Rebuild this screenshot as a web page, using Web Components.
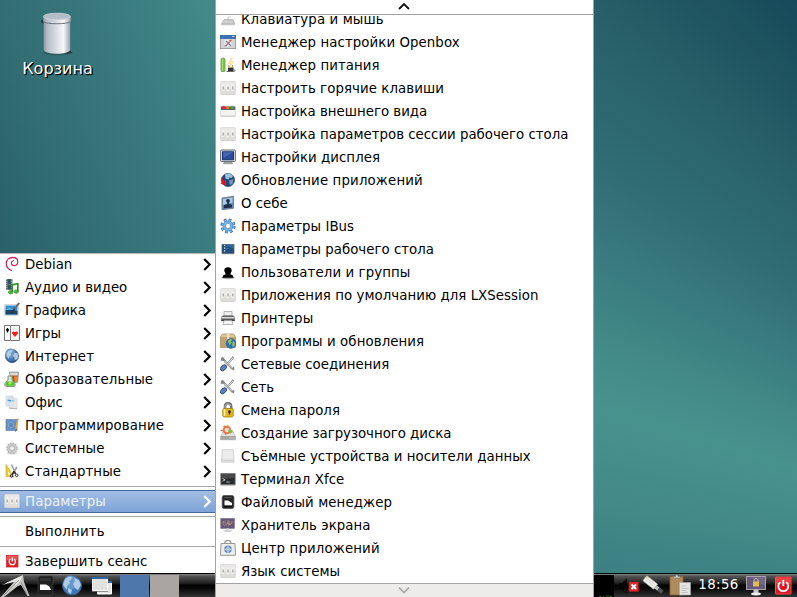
<!DOCTYPE html>
<html lang="ru">
<head>
<meta charset="utf-8">
<title>LXDE</title>
<style>
html,body{margin:0;width:797px;height:597px;overflow:hidden}
body{font:13.33px/23px "DejaVu Sans",sans-serif;color:#000}
</style>
</head>
<body>
<lx-desktop>
  <desk-shortcut slot="desk">Корзина</desk-shortcut>
  <lx-menu slot="main">
    <menu-row icon="debian" more>Debian</menu-row>
    <menu-row icon="media" more>Аудио и видео</menu-row>
    <menu-row icon="graphics" more>Графика</menu-row>
    <menu-row icon="games" more>Игры</menu-row>
    <menu-row icon="globe" more track=".16">Интернет</menu-row>
    <menu-row icon="edu" more track=".12">Образовательные</menu-row>
    <menu-row icon="office" more>Офис</menu-row>
    <menu-row icon="dev" more track=".11">Программирование</menu-row>
    <menu-row icon="gear" more track=".08">Системные</menu-row>
    <menu-row icon="util" more track=".1">Стандартные</menu-row>
    <menu-sep></menu-sep>
    <menu-row icon="switches" more active track=".12">Параметры</menu-row>
    <menu-sep></menu-sep>
    <menu-row track=".2">Выполнить</menu-row>
    <menu-sep></menu-sep>
    <menu-row icon="power" track=".05">Завершить сеанс</menu-row>
  </lx-menu>
  <scroll-menu slot="sub">
    <menu-row icon="keyboard" track=".11">Клавиатура и мышь</menu-row>
    <menu-row icon="openbox" track=".08">Менеджер настройки Openbox</menu-row>
    <menu-row icon="battery" track=".08">Менеджер питания</menu-row>
    <menu-row icon="switches" track=".07">Настроить горячие клавиши</menu-row>
    <menu-row icon="look">Настройка внешнего вида</menu-row>
    <menu-row icon="switches">Настройка параметров сессии рабочего стола</menu-row>
    <menu-row icon="display" track=".05">Настройки дисплея</menu-row>
    <menu-row icon="update" track=".15">Обновление приложений</menu-row>
    <menu-row icon="about">О себе</menu-row>
    <menu-row icon="ibus" track=".04">Параметры IBus</menu-row>
    <menu-row icon="desk" track=".02">Параметры рабочего стола</menu-row>
    <menu-row icon="users" track=".1">Пользователи и группы</menu-row>
    <menu-row icon="switches" track=".05">Приложения по умолчанию для LXSession</menu-row>
    <menu-row icon="printer" track=".2">Принтеры</menu-row>
    <menu-row icon="package" track=".09">Программы и обновления</menu-row>
    <menu-row icon="tools">Сетевые соединения</menu-row>
    <menu-row icon="tools">Сеть</menu-row>
    <menu-row icon="lock" track=".02">Смена пароля</menu-row>
    <menu-row icon="bootdisk" track="-.03">Создание загрузочного диска</menu-row>
    <menu-row icon="drive" track=".03">Съёмные устройства и носители данных</menu-row>
    <menu-row icon="terminal" track=".06">Терминал Xfce</menu-row>
    <menu-row icon="files" track=".1">Файловый менеджер</menu-row>
    <menu-row icon="saver" track=".06">Хранитель экрана</menu-row>
    <menu-row icon="bag" track=".14">Центр приложений</menu-row>
    <menu-row icon="switches">Язык системы</menu-row>
  </scroll-menu>
  <task-bar slot="bar">18:56</task-bar>
</lx-desktop>
<script>
const ICONS = {
debian:'<path d="M7.500 14.500C4.600 13.400 2.200 10.800 2.300 7.200 2.400 3.600 5.400 1.300 8.500 1.300c3.200 0 5.300 1.900 5.300 4.500 0 2.100-1.500 3.700-3.500 3.700-1.800 0-3.100-1.200-3-2.700.1-1.200 1-1.900 2.200-2" fill="none" stroke="#cb1d56" stroke-width="1.150" stroke-linecap="round"/><path d="M5 3.200C6.500 1.700 10 1 12 2.300" fill="none" stroke="#d0245c" stroke-width="1"/>',
media:'<path d="M2 0h6.500v11H2z" fill="#68737a"/><path d="M3.800 0h3v5h-3zm0 6h3v4h-3z" fill="#35505f"/><path d="M2.700 0v11M7.800 0v11" stroke="#cfd4d6" stroke-width=".7" stroke-dasharray="1 1"/><path d="M8.300 13V5.600l5.500-.9v7.500" fill="none" stroke="#2f8c28" stroke-width="1.700"/><ellipse cx="6.700" cy="13.200" rx="2.300" ry="1.700" fill="#4fb63b" stroke="#2a7a22" stroke-width=".6"/><ellipse cx="12.300" cy="12.600" rx="2.200" ry="1.700" fill="#4fb63b" stroke="#2a7a22" stroke-width=".6"/>',
graphics:'<path d="M.5 2.500h14v11H.5z" fill="#f4f4f2" stroke="#d0d0cc" stroke-width=".8"/><path d="M1.500 3.500h12v9h-12z" fill="#3191d2"/><path d="M1.500 8.500l4-1 8 1.500v3.500h-12z" fill="#17466f"/><path d="M1.500 7.500l4-1.300 4 1.300z" fill="#8ed0ee"/><path d="M15.200.8L9.500 8" stroke="#6a6c6c" stroke-width="1.900"/><path d="M10.500 7L7 11.500" stroke="#333" stroke-width="1.700"/>',
games:'<path d="M.5.5h6v15h-6z" fill="#fff" stroke="#777"/><path d="M6.500.5h9v15h-9z" fill="#f5f5f4" stroke="#777"/><path d="M3.500 3v4.500M2 5h3" stroke="#000" stroke-width="1.400"/><path d="M11 12L8.200 8.700C7.200 7 9.800 5.400 11 7.300c1.200-1.900 3.800-.3 2.800 1.400z" fill="#ef2020"/>',
globe:'<circle cx="8" cy="8" r="6.600" fill="#4775ae" stroke="#3b5c8c" stroke-width=".7"/><circle cx="6.500" cy="5.500" r="5" fill="#6d96c6"/><path d="M3 4.500C4.500 2 7 1.800 8.800 2.200l-.8 2-1.500.8 1 1.500-2 2-1 2.500-2-3zM10.500 4.800l3.200.5.400 4-2 3-1.500-1-.3-2.500-1.500-1z" fill="#b3c9e0"/><path d="M3.500 11.500c3 3 7 2.500 9.500-.5-2 4-6.500 5-9.500.5z" fill="#27436e"/>',
edu:'<path d="M5.500 1.200h9l-.9 10-6 .3z" fill="#d9dcd8" stroke="#777" stroke-width=".8"/><path d="M7.500 4.500h6.200l-.5 6-4 .5z" fill="#af5a21"/><path d="M10 5.500l3.600.2-.4 4.800-2 .2z" fill="#e98c28"/><path d="M4 5h4v3.500l3 4.200c.7 1.600 0 2.800-1.500 2.800h-7C1 15.500.3 14 1.200 12.500L4 8.500z" fill="#d2e8c8" stroke="#6f766b" stroke-width=".8"/><path d="M2.900 10.500h6.500l1 2c.6 1.500-.2 2.300-1.400 2.300H2.600c-1.200 0-1.500-1-1-2z" fill="#53c323"/><circle cx="6" cy="12" r="1.500" fill="#b1ef7b"/>',
office:'<path d="M2 2h7v10H2z" fill="#dce7ef" stroke="#c6ced4" stroke-width=".6"/><path d="M5.500 3.500l7.500 1v10.300l-8-.8z" fill="#e7e7e6" stroke="#ccc" stroke-width=".6"/><path d="M2.500 5h7v6.500h-7z" fill="#d7e4ee" opacity=".8"/><path d="M3.500 5.500l3.500.5v1.500l-3.500-.4z" fill="#4e9bd0"/><path d="M7.500 6l3 .4v1l-3-.2z" fill="#88b8d8"/><path d="M5 14.200l8 .6" stroke="#aaa" stroke-width=".8"/>',
dev:'<path d="M2 2.500h11v11H2z" fill="#6089bf" stroke="#6581a8" stroke-width=".7"/><path d="M3 4h8M3 12h8M4 3v10M11 3v10" stroke="#7a9fce" stroke-width=".6"/><circle cx="7" cy="8" r="2.700" fill="none" stroke="#88a9d3" stroke-width=".8"/><path d="M14 1.500l-2.300 11" stroke="#e0aa43" stroke-width="1.600"/><path d="M12.300 12l-.8 2.500" stroke="#6b5a37"/>',
gear:'<ellipse cx="8" cy="13" rx="5" ry="1.500" fill="#ddd"/><circle cx="8" cy="8.300" r="5" fill="#ccc" stroke="#b4b4b3" stroke-width="1.600" stroke-dasharray="1.700 .9"/><circle cx="8" cy="8.300" r="4.500" fill="#cacac9"/><circle cx="8" cy="8.300" r="2.500" fill="#ececeb" stroke="#aaa" stroke-width=".8"/>',
util:'<path d="M2 1.500V13.500h7.500z" fill="#edc92f" stroke="#d9b52b" stroke-width=".8"/><path d="M4 8v3.500h2.500z" fill="#fff"/><path d="M7.500 1.500L11.500 10M13 4L8.500 11" stroke="#9a9c9a" stroke-width="1.500"/><path d="M9.800 8.500l2 2.500M10 8.500l-2 3.500" stroke="#333" stroke-width="1.600"/><circle cx="7.600" cy="13" r="1.300" fill="none" stroke="#333"/><circle cx="12.700" cy="12.300" r="1.300" fill="none" stroke="#333"/>',
switches:'<rect x=".3" y="1" width="15.400" height="14" rx="1.500" fill="#d4d3d0"/><rect x="1" y="1.500" width="14" height="12.500" rx="1" fill="#e9e8e6"/><path d="M1 8.500h14V14H1z" fill="#dfddda"/><path d="M3 4.500v6.500M7.800 4.500v6.500M12.600 4.500v6.500" stroke="#f3f3f2" stroke-width="2.600"/><path d="M3.200 6.500v3M8 6.500v3M12.800 6.500v3" stroke="#a3a29f" stroke-width="1.300"/>',
power:'<rect x="2.500" y="2.500" width="11.500" height="11.500" fill="#df2026" stroke="#c9161c" stroke-width=".7"/><path d="M3 3h10.500v4H3z" fill="#ec5557"/><path d="M6.300 6.200a3.100 3.100 0 1 0 4 0M8.300 4.500v4" fill="none" stroke="#fff" stroke-width="1.300"/>',
keyboard:'<path d="M1.500 12.500l2.800-4h8.500l2 4z" fill="#c5c6c5" stroke="#b1b2b1" stroke-width=".8"/><path d="M4 10h8M3 11.500h10" stroke="#ddd" stroke-width=".8" stroke-dasharray="1 .6"/><path d="M1 13.500h14" stroke="#c6c6c6" stroke-width="1.500"/><path d="M8 8V6h3" fill="none" stroke="#bbb" stroke-width=".8"/>',
openbox:'<rect x=".5" y="1.500" width="15" height="13" fill="#d3d4d4" stroke="#a0a09d"/><path d="M0 1h16v4H0z" fill="#3d70b3"/><path d="M12 2.500h2.500" stroke="#b9d0ee"/><path d="M4.500 5.500h7v7h-7z" fill="#e9e9e9"/><path d="M11.500 6l-6 6M11 7.500l-1.500-1.500" stroke="#d6625c" stroke-width="1.200"/><path d="M6 7l5 5M4.500 12l2-.5" stroke="#7580a0" stroke-width="1.100"/>',
battery:'<rect x="1" y="1.500" width="4" height="13" rx=".7" fill="#73c83f" stroke="#6a9a50" stroke-width=".8"/><path d="M2.500 2v12" stroke="#a1e06f" stroke-width="1"/><path d="M2 .5h2v1H2z" fill="#aaa"/><path d="M11 1L7.800 6.500h3l-.8 3 4-5h-3l1.600-3.500z" fill="#fff0b8" stroke="#f0d88a" stroke-width=".6"/><path d="M8 10.500h5.500v4H8z" fill="#333"/><path d="M9 8v3m3.500-3v3" stroke="#b39b66" stroke-width="1.200"/><path d="M6.500 14.500h7c2 0 1.500-2 0-2" stroke="#666" fill="none"/>',
look:'<rect x=".8" y="3" width="14.400" height="10.500" fill="#f4f4f3" stroke="#d0d0ce" stroke-width=".7"/><path d="M1 3.500h14.200v3.500H1z" fill="#5d615f"/><path d="M2.300 3.300h2.700v2.700H2.300z" fill="#db2545"/><path d="M6.300 3.300h2.900v2.700H6.300z" fill="#e67d2b"/><path d="M10.700 3.300h2.900v2.700h-2.900z" fill="#3aa74b"/><path d="M1 13h14" stroke="#c9c9c7"/>',
display:'<rect x=".6" y="1" width="14.800" height="11.500" rx=".8" fill="#dfe0df" stroke="#656b70"/><path d="M2.500 2.800h11v8h-11z" fill="#2e4d9c" stroke="#17326f"/><path d="M3 3.200h10L3.500 9z" fill="#4866ae"/><path d="M4.500 13h7l1 1.700h-9z" fill="#b8bab7" stroke="#777b75" stroke-width=".7"/>',
update:'<circle cx="8" cy="8" r="6.500" fill="#234b7d" stroke="#173459" stroke-width=".7"/><path d="M5 2.500c3-2 6-1 8 1.500l-1.500 2-2-.5-1 2-3-1z" fill="#9dc1df"/><path d="M9 8.500l4.500-1.500-1 5-2.500 1z" fill="#6d98c0"/><path d="M2 5C.8 7 1 9 2 10.500L.3 11.500l5.500 2.300L6 7.800 4.300 9C3 8 2.500 6.500 2 5z" fill="#d91a2b"/>',
about:'<path d="M2 3l11.500-1.700v12L2 14.700z" fill="#608dbb" stroke="#747a7b" stroke-width=".9"/><path d="M3 4l9.500-1.400v5L3 10z" fill="#a9c9e4"/><circle cx="8" cy="5.800" r="1.900" fill="#1b2f47"/><path d="M7.200 6.500h1.800v2.200l3 1.200v2.500l-8.200.8v-3l3.400-1.300z" fill="#1b2f47"/>',
ibus:'<circle cx="8" cy="8" r="5.500" fill="none" stroke="#32679d" stroke-width="4.200" stroke-dasharray="2.300 2.019"/><circle cx="8" cy="8" r="5.500" fill="none" stroke="#78b2e5" stroke-width="2.800" stroke-dasharray="1.600 2.719" stroke-dashoffset="-.35"/><circle cx="8" cy="8" r="3.700" fill="none" stroke="#4482be" stroke-width="3.400"/><circle cx="8" cy="8" r="3.700" fill="none" stroke="#7ab6e8" stroke-width="2.200"/><circle cx="8" cy="8" r="2" fill="#fff"/>',
desk:'<path d="M1.500 3h13v10.500h-13z" fill="#c8c8c6"/><path d="M2.200 3.700h11.600v8.500H2.200z" fill="#245080" stroke="#214366" stroke-width=".7"/><path d="M6 3.700h7.800v4z" fill="#356ba4"/><path d="M4 4.500h1.300M4 7.200h1.300M4 9.900h1.300" stroke="#dce7f0" stroke-width="1.200"/><path d="M6 5h3M6 7.500h3" stroke="#54799f" stroke-width=".6"/>',
users:'<ellipse cx="8" cy="13.700" rx="6.500" ry="1.600" fill="#aaa"/><path d="M4.300 7C4.300 4 6 3.300 8 3.300s3.700.7 3.700 3.700L10.500 9.800v.8c1.500.3 3 .7 3 3.200H2.500c0-2.500 1.500-2.900 3-3.200v-.8z" fill="#050505"/>',
printer:'<path d="M4 1.500h8v5H4z" fill="#eee" stroke="#999" stroke-width=".7"/><path d="M3 5.500h10l1.500 1.500v3.500h-13V7z" fill="#6a6d6e" stroke="#888" stroke-width=".7"/><path d="M2 7.800h12" stroke="#ddd" stroke-width="1.400"/><path d="M1.300 9.500h13.400v1.600H1.300z" fill="#3c3e3e"/><path d="M4 10.500h8l1 4H3z" fill="#f4f4f4" stroke="#999" stroke-width=".7"/>',
package:'<path d="M.5 4l2-3h11l2 3v10.500H.5z" fill="#c0a26f" stroke="#a98f61" stroke-width=".8"/><path d="M1 4h14l-1.500-2.500h-11z" fill="#dcc99b"/><path d="M7 1h2.300v5H7z" fill="#eee1c1"/><circle cx="11" cy="10.500" r="4.900" fill="#2a71b7" stroke="#285687" stroke-width=".5"/><path d="M7.700 8l3-2.200 1.700 1-1.700 1.700 1 1.300-2 2.500zM13 7.700l2 2-.5 3-1.500 1.500-1-2.500z" fill="#8bc363"/>',
tools:'<path d="M1.500 1.500l4 4M3.500 1.500L3 4 .8 3.700M4.500 4.800l8.500 8.700" fill="none" stroke="#858888" stroke-width="2"/><path d="M4.500 4.800l8.500 8.700" stroke="#e3e4e4" stroke-width="1"/><path d="M13.500 1L7 8.300" stroke="#858888" stroke-width="2"/><path d="M13.200 1.500L7 8.300" stroke="#eee" stroke-width=".9"/><path d="M11.500 12.500l3 .2M13.500 11v3.300" stroke="#888" stroke-width="1"/><ellipse cx="3.500" cy="11.800" rx="3.600" ry="2.300" fill="#5d83ba" stroke="#213b70" stroke-width=".8" transform="rotate(-43 3.500 11.800)"/>',
lock:'<path d="M5 7.500V4.800C5 0 11.200 0 11.200 4.800V7" fill="none" stroke="#747572" stroke-width="2.600"/><path d="M5 7.500V4.800C5 1 10.500 1 11 4" fill="none" stroke="#bcbdb9" stroke-width=".8"/><rect x="2.700" y="6.500" width="10.600" height="8.500" rx="1.700" fill="#e5b91c" stroke="#a37e09" stroke-width=".8"/><path d="M4.500 7v7" stroke="#fff09a" stroke-width="1.600"/><path d="M9.500 8.500v4" stroke="#302604" stroke-width="1.500"/><circle cx="9.500" cy="9.700" r="1.300" fill="#302604"/>',
bootdisk:'<path d="M.8 11.500L3 7h10l2.200 4.500z" fill="#e4e4e2" stroke="#b5b5b2" stroke-width=".8"/><path d="M.6 11.500h14.800v3.200H.6z" fill="#b4b4b0" stroke="#999995" stroke-width=".7"/><path d="M2 13h7" stroke="#888" stroke-dasharray="1 .6"/><circle cx="7" cy="5" r="3.300" fill="#fbdcc8" stroke="#e87a4c" stroke-width="1.900"/><path d="M.5 5.500h3M3.500 1l2 1.500M5 9.500l1-2M8 .5v2" stroke="#e87748" stroke-width="1.700"/><path d="M9.500 3.500l4 2.500-3.500 3-2-3z" fill="#8bb853"/>',
drive:'<path d="M2.300 1.500h11l.8 10.500v2.300H1.500V12z" fill="#e0e0df" stroke="#d2d2d0" stroke-width=".8"/><path d="M3 2.200h9.500l.6 9H2.500z" fill="#ebebeb"/><path d="M1.700 12.500h12.300" stroke="#d2d2d1" stroke-width="1.500"/>',
terminal:'<path d="M.8 2.500h14.400v11.300H.8z" fill="#282a2c" stroke="#777" stroke-width=".8"/><path d="M1.500 3h13.300v4L1.500 8z" fill="#46484a"/><path d="M2.500 7.500l2.700 1.400-2.700 1.400M6.500 11h3" fill="none" stroke="#ccc" stroke-width=".9"/><path d="M.8 14.200h14.400" stroke="#aaa" stroke-width=".7"/>',
files:'<rect x="2.200" y="1.500" width="11.700" height="13" rx="1.800" fill="#272727" stroke="#4b4b4b" stroke-width=".7"/><path d="M4.500 3.500h7" stroke="#555"/><path d="M4.500 6.500h3.500l2.500 1.500 1.500 1v2.500H4.500z" fill="#fff"/><path d="M4 12.200h8" stroke="#000"/>',
saver:'<rect x=".8" y="1.500" width="13.500" height="9.800" fill="#66577c" stroke="#77717f" stroke-width=".7"/><path d="M2 5l3-2 2 3 2-3 3 4-3 2-4-1z" fill="#806c82"/><path d="M4 4c-2 2-1 4 1 5M8 3v4c3 1 4 0 4-3M7 6l3 1" fill="none" stroke="#b49a64" stroke-width=".9"/><path d="M6.500 11.300h2.500v2H6.500z" fill="#d5d4d7"/><ellipse cx="7.700" cy="14" rx="4.500" ry="1.100" fill="#d0cfd2"/>',
bag:'<path d="M4.800 4V2.500C5 -.3 10.500 -.3 11 2.500V4" fill="none" stroke="#929490" stroke-width="1.200"/><path d="M1 3.500h14l.5 11.800H.5z" fill="#ededeb" stroke="#969994" stroke-width="1"/><circle cx="8" cy="9.300" r="3.700" fill="#5684bb"/><path d="M8 5.500v7.500M4.200 9.300h7.600" stroke="#d8e4f0" stroke-width=".9"/><circle cx="8" cy="9.300" r="2" fill="none" stroke="#d8e4f0" stroke-width=".6"/>'
};
const def=(name,css,html)=>customElements.define(name,class extends HTMLElement{
  connectedCallback(){ if(this.shadowRoot) return;
    const r=this.attachShadow({mode:'open'});
    r.innerHTML='<style>'+css+'</style>'+(typeof html==='function'?html(this):html); }
});
const chevron='<svg class="more" width="9" height="13" viewBox="0 0 9 13"><path d="M1.200 1L6.700 6.500 1.200 12" fill="none" stroke="currentColor" stroke-width="2.200"/></svg>';

def('lx-icon',':host{display:block;width:16px;height:16px;flex:none}svg{display:block}',
  e=>'<svg width="16" height="16" viewBox="0 0 16 16">'+(ICONS[e.getAttribute('name')]||'')+'</svg>');

def('menu-row',`:host{display:flex;align-items:flex-start;height:23px;box-sizing:border-box;padding:0 3px 0 4px;gap:5px;flex:none;white-space:nowrap}
 lx-icon{margin-top:3px}.t{flex:1;line-height:23px}.more{display:block;margin-top:5px}
 :host([active]){color:#fff;background:linear-gradient(#a4bfe6,#7da2d5);box-shadow:inset 0 1px #45699c,inset 0 -1px #45699c}
 :host([active]) .t{color:#eff3f9}`,
 e=>`<lx-icon name="${e.getAttribute('icon')||''}"></lx-icon><span class="t" style="letter-spacing:${e.getAttribute('track')||0}px"><slot></slot></span>${e.hasAttribute('more')?chevron:''}`);

def('menu-sep',':host{display:flex;flex:none;height:7px;align-items:center}i{height:1px;flex:1;background:#aaa8a6}','<i></i>');

def('lx-menu',':host{display:flex;flex-direction:column;box-sizing:border-box;width:216px;background:#fff;border-right:1px solid #a8a8a8;box-shadow:inset 0 1px #b9b9b9}','<slot></slot>');

def('scroll-menu',`:host{display:flex;flex-direction:column;box-sizing:border-box;width:379px;height:597px;background:#fff;border:solid #a3a3a3;border-width:0 1px}
 .b{flex:none;box-sizing:border-box;display:flex;justify-content:center;align-items:center}svg{display:block}
 .u{height:15px;border-bottom:1px solid #a3a3a3;padding:0 1px 2px 0}.d{height:14px;border-top:1px solid #a3a3a3;background:#edeceb;color:#a8a8a8;padding:0 1px 1px 0}
 .list{flex:1;min-height:0;overflow:hidden;display:flex;flex-direction:column;justify-content:flex-end}`,
 `<div class="b u"><svg width="12" height="8" viewBox="0 0 12 8"><path d="M1 7L6 2l5 5" fill="none" stroke="#111" stroke-width="1.900"/></svg></div>
 <div class="list"><slot></slot></div>
 <div class="b d"><svg width="12" height="8" viewBox="0 0 12 8"><path d="M1 1.500L6 6.500l5-5" fill="none" stroke="currentColor" stroke-width="1.700"/></svg></div>`);

def('desk-shortcut',`:host{display:flex;flex-direction:column;align-items:center;width:115px;padding-top:10px;color:#fff;font-size:16px;line-height:22px;text-shadow:1px 1px 0 #000,1px 1px 1px #000}svg{display:block}`,
 `<svg width="48" height="48" viewBox="0 0 48 48"><defs><linearGradient id="b"><stop offset="0" stop-color="#8b939f"/><stop offset=".12" stop-color="#b3bbc6"/><stop offset=".55" stop-color="#e1e5ea"/><stop offset=".75" stop-color="#f5f6f8"/><stop offset="1" stop-color="#9ea5b0"/></linearGradient></defs><g transform="translate(-.8 0)">
 <ellipse cx="24" cy="42.500" rx="14" ry="3" fill="#274e52" opacity=".6"/><path d="M31 40l7 1.500 1.500 1.500-6 1z" fill="#29393b"/><ellipse cx="9.500" cy="11.500" rx="1.600" ry="2" fill="#29393b"/>
 <path d="M10.500 12h26.500v28c-2 5-24.500 5-26.500 0z" fill="url(#b)"/><path d="M10 7h27.500v5c-3 3-24.500 3-27.500 0z" fill="url(#b)"/><path d="M10 11.500c3 3 24.500 3 27.500 0" fill="none" stroke="#68717b" stroke-width="1"/><ellipse cx="23.700" cy="6.500" rx="13.500" ry="3.300" fill="#b4bcc7" stroke="#d2d7dd" stroke-width=".8"/></g></svg><span><slot></slot></span>`);

def('task-bar',`:host{display:flex;box-sizing:border-box;height:24px;width:797px;border-top:1px solid #000;background:linear-gradient(#858585 0,#555 2px,#373737 6px,#191919 10px,#000 11px,#0b0b0b 15px,#333 23px);color:#fff}
 svg{display:block;flex:none}.desk{width:29px;margin:1px 1px 0 0}.l{display:flex;width:215px}.r{display:flex;width:203px;margin-left:auto}.time{width:47px;text-align:center;line-height:22px;letter-spacing:.4px}`,
 `<div class="l"><svg width="120" height="23" viewBox="0 0 120 23">
 <path d="M23 1L2 11l12-3L1 23h3l14-11 3-1 6.500 11h2L24 8z" fill="#c4c4c2"/><path d="M22.500 1.500L5 9.500l12-2.500-9 10L19.500 8z" fill="#e9e9e7"/><path d="M19 6L4 21M21 8l6 12" stroke="#80807e" stroke-width=".8"/>
 <rect x="38" y="2" width="15" height="19" rx="2" fill="#202020" stroke="#444" stroke-width=".7"/><path d="M40 4h11v3H40z" fill="#333"/><path d="M40 10.500h6l3.500 2 1.500 3.500H40z" fill="#fff"/>
 <circle cx="72" cy="11.500" r="9.500" fill="#4179b8" stroke="#36608f"/><circle cx="70.500" cy="8.500" r="7" fill="#6599cd"/><path d="M64 8c1-4 5-6 8-5l-1 3-2 1 1 2-3 3v4l-4-5zM74 4l5 2 2 5-3 5-3-2-2-4 2-3zM68 14l4 2-1 4-3-2z" fill="#b0cce6"/>
 <path d="M97.500 7.500h14v12.500h-14z" fill="#e5e5e3" stroke="#fff"/><path d="M97 7h15v2H97z" fill="#3068ae"/><path d="M92.500 3.500h15v13h-15z" fill="#e1e1df" stroke="#fff"/><path d="M92 3h16v2H92z" fill="#2e63a6"/><path d="M92 17h16v.8H92z" fill="#777"/></svg>
 <div class="desk" style="background:#4e77ab"></div><div class="desk" style="background:#aaa5a2"></div></div>
 <div class="r"><svg width="101" height="23" viewBox="0 0 101 23"><path d="M0 1h20v22H0z" fill="#000"/><path d="M5 22.500h2m2 0h1m2-.5h3m1 .5h2" stroke="#168016" stroke-width="1"/>
 <path d="M25 9h3l5-5v16l-5-5h-3z" fill="#050505"/><rect x="35" y="8" width="9.500" height="9.500" fill="#dc2a30" stroke="#ac171c" stroke-width=".6"/><path d="M37.500 10.500l4.500 4.500m0-4.500l-4.500 4.500" stroke="#fff" stroke-width="1.800"/>
 <g transform="rotate(38 57 10)"><rect x="48.500" y="6" width="14" height="6.500" rx="1" fill="#f1f1ee" stroke="#aaa" stroke-width=".7"/><path d="M50 8h11M50 10h11" stroke="#c1c1bd" stroke-width=".6"/><rect x="62.500" y="7.500" width="3.500" height="4" fill="#bbb"/><path d="M66 9.500h5" stroke="#555" stroke-width="4"/></g><path d="M51 4l3-1" stroke="#e8d06c" stroke-width="1.300"/>
 <rect x="76" y="2.500" width="13" height="18.500" fill="#ae8b5c" stroke="#846438" stroke-width=".8"/><path d="M79.500 4V2.500h2c0-2 2.500-2 2.500 0h2V4z" fill="#ccc" stroke="#777" stroke-width=".5"/><path d="M85.500 8.500h11V21h-11z" fill="#e4e5e1" stroke="#aaa" stroke-width=".6"/><path d="M87.500 12h5M87.500 14.500h7M87.500 16.500h5M87.500 18.500h6" stroke="#b9bbb7" stroke-width=".8"/></svg>
 <div class="time"><slot></slot></div>
 <svg width="55" height="23" viewBox="0 0 55 23"><rect x="4.500" y="2.500" width="19" height="13" fill="#665679" stroke="#a9a0ad"/><path d="M8 3h15v9z" fill="#776787"/><path d="M11.500 15.500h5v4h-5z" fill="#c9c7cb"/><ellipse cx="14" cy="20" rx="5" ry="1.400" fill="#eee"/><path d="M12 8V6.500c0-2.500 4-2.500 4 0V8" fill="none" stroke="#c8c2a2"/><rect x="11" y="7.500" width="6" height="5" fill="#dcc04e"/>
 <rect x="33.500" y="3" width="15.500" height="17" rx=".5" fill="#dc171d" stroke="#f55356"/><path d="M34 3.500h14.500V10H34z" fill="#ee4144"/><path d="M38.300 8.200a5 5 0 1 0 6 0M41.300 6v6" fill="none" stroke="#fff" stroke-width="1.800"/></svg></div>`);

def('lx-desktop',`:host{display:block;position:relative;width:797px;height:597px;overflow:hidden;
 background:linear-gradient(70deg,#2a6069,#326e74 30%,#3a7c7f 68%,#448b8a) 0 0/216px 260px no-repeat,
 conic-gradient(from 0deg at 1410px 661px,#3a7c80 0 272deg,#3c8083 276deg,#428987 281deg,#48928e 287.500deg,#438b88 291deg,#387a7e 297deg,#2f6c73 302deg,#29616a 308deg,#205661 312deg,#16495a 317.500deg,#16495a)}
 ::slotted(*){position:absolute}::slotted([slot=desk]){left:0;top:0}::slotted([slot=main]){left:0;bottom:24px}::slotted([slot=bar]){left:0;bottom:0}::slotted([slot=sub]){left:215px;top:0}`,
 '<slot name="desk"></slot><slot name="bar"></slot><slot name="main"></slot><slot name="sub"></slot>');
</script>
</body>
</html>
